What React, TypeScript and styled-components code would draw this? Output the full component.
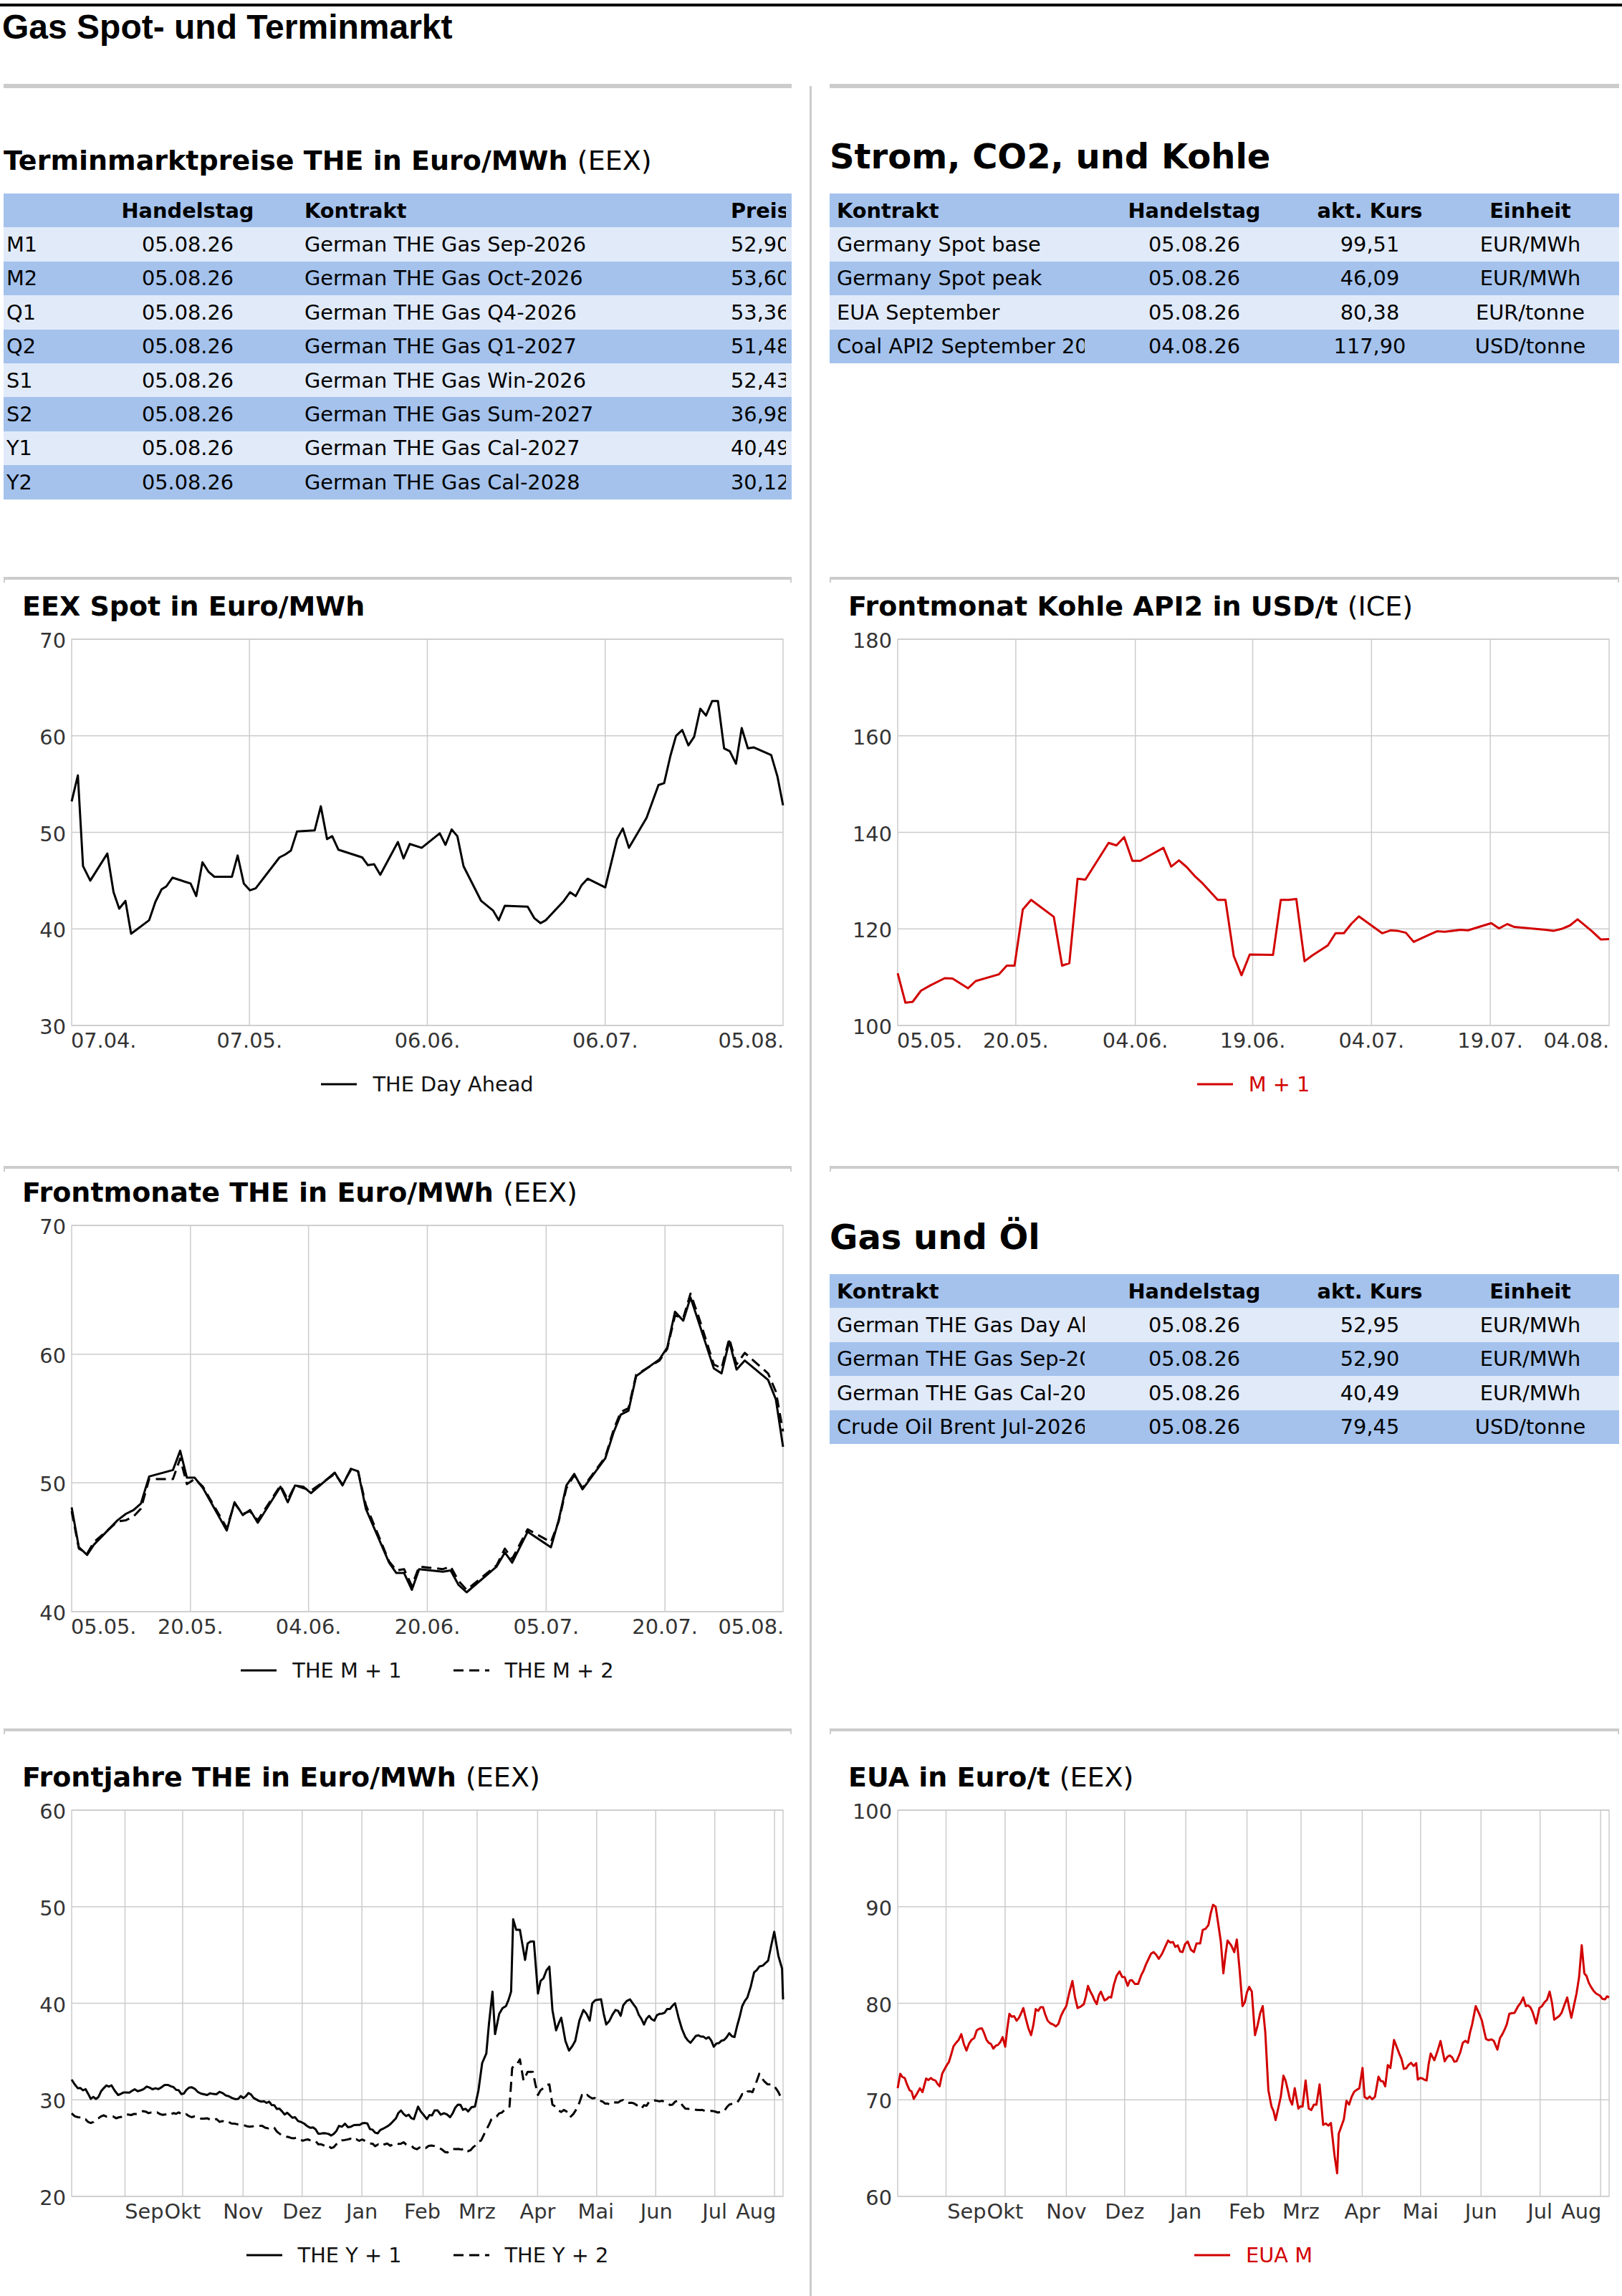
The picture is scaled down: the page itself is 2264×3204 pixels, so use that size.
import React from "react";
import styled, { createGlobalStyle } from "styled-components";

const SANS = `"DejaVu Sans", "Noto Sans", sans-serif`;

const GlobalStyle = createGlobalStyle`
  html, body { margin: 0; padding: 0; background: #fff; }
  body { font-family: ${SANS}; color: #000; }
  * { box-sizing: border-box; }
`;

type Pt = [number, number];

const conv = (x0: number, raw: number[][]): Pt[] =>
  raw.map(([zx, v]) => [(zx - x0) / 1376, v] as Pt);

function noisy(keys: Pt[], step: number, amp: number, seed: number): Pt[] {
  const out: Pt[] = [];
  let k = 0;
  for (let i = 0; i < keys.length - 1; i++) {
    const [x0, v0] = keys[i];
    const [x1, v1] = keys[i + 1];
    const n = Math.max(1, Math.round((x1 - x0) / step));
    for (let j = 0; j < n; j++) {
      const t = j / n;
      const r = Math.sin((k++ + seed) * 12.9898) * 43758.5453;
      const jit = j === 0 ? 0 : (r - Math.floor(r) - 0.5) * 2 * amp;
      out.push([x0 + (x1 - x0) * t, v0 + (v1 - v0) * t + jit]);
    }
  }
  out.push(keys[keys.length - 1]);
  return out;
}

/* ---------- data ---------- */

const spot = conv(138, [
  [138, 53.2], [150, 55.9], [160, 46.5], [174, 45.0], [207, 47.8], [219, 43.8], [230, 42.1], [242, 42.9],
  [253, 39.5], [288, 40.9], [300, 42.8], [312, 44.1], [321, 44.4], [333, 45.3], [368, 44.7], [379, 43.4],
  [391, 46.9], [403, 45.9], [414, 45.4], [448, 45.4], [459, 47.6], [471, 44.7], [483, 44.0], [494, 44.2],
  [540, 47.4], [551, 47.7], [562, 48.1], [574, 50.1], [608, 50.2], [620, 52.7], [632, 49.3], [642, 49.6],
  [654, 48.2], [700, 47.4], [711, 46.6], [723, 46.7], [735, 45.6], [769, 49.0], [780, 47.3], [792, 48.8],
  [815, 48.4], [850, 49.9], [861, 48.7], [873, 50.3], [884, 49.6], [896, 46.5], [930, 42.9], [953, 41.9],
  [964, 40.9], [976, 42.4], [1020, 42.3], [1033, 41.1], [1045, 40.6], [1055, 40.9], [1090, 42.9], [1102, 43.8],
  [1113, 43.4], [1124, 44.5], [1136, 45.2], [1170, 44.3], [1193, 49.3], [1204, 50.4], [1216, 48.4], [1250, 51.5],
  [1273, 54.9], [1284, 55.1], [1296, 57.9], [1307, 60.0], [1319, 60.6], [1331, 59.0], [1342, 59.9], [1354, 62.8],
  [1365, 62.1], [1377, 63.6], [1388, 63.6], [1400, 58.7], [1411, 58.4], [1423, 57.1], [1434, 60.8], [1446, 58.7],
  [1457, 58.8], [1491, 58.0], [1503, 55.8], [1514, 52.8],
]);

const coal = conv(167, [
  [167, 110.8], [182, 104.7], [196, 104.9], [212, 107.2], [230, 108.3], [258, 109.8], [273, 109.7], [303, 107.7],
  [318, 109.2], [363, 110.6], [378, 112.4], [393, 112.4], [409, 124.0], [425, 126.0], [469, 122.5], [485, 112.4],
  [499, 112.9], [515, 130.4], [530, 130.2], [575, 137.8], [590, 137.3], [605, 139.0], [621, 134.1], [636, 134.1],
  [681, 136.8], [696, 132.9], [711, 134.2], [726, 132.8], [741, 131.0], [757, 129.4], [786, 126.0], [801, 126.0],
  [817, 114.4], [832, 110.4], [848, 114.7], [893, 114.6], [908, 126.0], [923, 126.0], [938, 126.2], [954, 113.3],
  [969, 114.5], [999, 116.6], [1014, 119.1], [1030, 119.1], [1044, 121.0], [1059, 122.6], [1104, 119.1], [1120, 119.7],
  [1134, 119.6], [1150, 119.2], [1165, 117.3], [1195, 118.8], [1210, 119.5], [1225, 119.4], [1255, 119.8], [1270, 119.7],
  [1315, 121.2], [1330, 120.1], [1346, 121.0], [1360, 120.4], [1420, 119.8], [1436, 119.6], [1451, 120.0], [1467, 120.7],
  [1482, 122.0], [1510, 119.5], [1527, 117.8], [1543, 117.9],
]);

const m1 = conv(138, [
  [138, 48.1], [152, 45.0], [168, 44.4], [181, 45.2], [227, 47.1], [243, 47.6], [258, 47.9], [272, 48.4],
  [288, 50.5], [334, 51.0], [348, 52.5], [361, 50.4], [376, 50.4], [392, 49.6], [438, 46.3], [453, 48.5],
  [469, 47.5], [483, 47.9], [498, 46.9], [542, 49.7], [556, 48.5], [570, 49.8], [586, 49.7], [601, 49.2],
  [647, 50.8], [662, 49.8], [678, 51.1], [692, 50.9], [707, 48.0], [752, 43.8], [766, 43.0], [781, 43.0],
  [796, 41.7], [810, 43.3], [856, 43.1], [871, 43.2], [886, 42.1], [902, 41.5], [960, 43.5], [976, 44.6],
  [990, 43.8], [1020, 46.2], [1065, 45.0], [1080, 47.1], [1095, 49.8], [1110, 50.7], [1126, 49.5], [1170, 51.9],
  [1186, 53.9], [1200, 55.3], [1215, 55.6], [1230, 58.3], [1275, 59.6], [1290, 60.5], [1305, 63.3], [1321, 62.6],
  [1335, 64.4], [1350, 62.6], [1380, 58.9], [1395, 58.5], [1410, 61.0], [1424, 58.8], [1440, 59.5], [1485, 58.0],
  [1500, 56.5], [1514, 52.8],
]);

const m2 = conv(138, [
  [138, 47.8], [152, 44.9], [168, 44.5], [181, 45.4], [227, 47.0], [243, 47.1], [258, 47.4], [272, 48.0],
  [288, 50.3], [334, 50.3], [348, 51.9], [361, 49.9], [376, 50.3], [392, 49.7], [438, 46.5], [453, 48.4],
  [469, 47.6], [483, 47.8], [498, 47.1], [542, 49.8], [556, 48.7], [570, 49.8], [586, 49.6], [601, 49.4],
  [647, 50.7], [662, 49.9], [678, 51.0], [692, 50.9], [707, 48.3], [752, 43.9], [766, 43.2], [781, 43.3],
  [796, 42.0], [810, 43.5], [856, 43.3], [871, 43.5], [886, 42.4], [902, 41.7], [960, 43.6], [976, 44.9],
  [990, 44.1], [1020, 46.4], [1065, 45.4], [1080, 47.0], [1095, 49.6], [1110, 50.6], [1126, 49.6], [1170, 52.0],
  [1186, 54.1], [1200, 55.5], [1215, 55.8], [1230, 58.4], [1275, 59.5], [1290, 60.4], [1305, 63.0], [1321, 62.8],
  [1335, 64.7], [1350, 63.0], [1380, 59.2], [1395, 58.9], [1410, 61.2], [1424, 59.2], [1440, 60.1], [1485, 58.5],
  [1500, 57.1], [1514, 54.0],
]);

const y1 = noisy(conv(138, [
  [138, 32.1], [150, 31.2], [165, 31.1], [175, 30.1], [190, 30.3], [200, 31.2], [215, 31.5], [228, 30.5],
  [260, 31.1], [300, 31.2], [330, 31.4], [350, 30.6], [370, 31.3], [400, 30.5], [430, 30.7], [460, 30.1],
  [480, 30.7], [500, 29.9], [520, 29.8], [545, 28.8], [570, 28.2], [600, 27.1], [620, 26.5], [640, 26.3],
  [655, 27.3], [690, 27.4], [705, 27.6], [725, 26.6], [750, 27.3], [760, 27.8], [775, 28.9], [800, 28.0],
  [808, 29.3], [825, 28.0], [840, 28.9], [870, 28.2], [885, 29.5], [905, 28.8], [918, 29.3], [925, 31.0],
  [932, 33.8], [940, 34.8], [945, 37.8], [952, 41.2], [957, 36.8], [965, 38.9], [978, 39.7], [988, 41.2],
  [992, 48.7], [998, 47.6], [1005, 47.6], [1015, 44.5], [1020, 46.2], [1032, 46.4], [1040, 41.0], [1045, 42.3],
  [1062, 43.8], [1068, 39.3], [1075, 37.2], [1085, 38.5], [1093, 36.1], [1100, 35.1], [1112, 36.1], [1120, 38.2],
  [1128, 39.3], [1140, 38.2], [1145, 40.0], [1162, 40.4], [1172, 37.8], [1190, 39.3], [1200, 38.7], [1205, 39.8],
  [1218, 40.4], [1230, 39.5], [1245, 37.8], [1255, 38.7], [1265, 38.2], [1275, 38.9], [1295, 39.4], [1305, 40.0],
  [1312, 38.5], [1325, 36.5], [1335, 35.9], [1345, 36.6], [1370, 36.5], [1380, 35.5], [1400, 36.2], [1410, 36.9],
  [1420, 36.5], [1435, 39.7], [1445, 40.6], [1458, 43.2], [1468, 43.8], [1475, 43.9], [1485, 44.4], [1492, 46.2],
  [1497, 47.4], [1505, 44.9], [1512, 43.6], [1514, 40.4],
]), 0.004, 0.22, 3);

const y2 = noisy(conv(138, [
  [138, 28.6], [150, 28.2], [175, 27.6], [200, 28.4], [230, 28.2], [270, 28.7], [320, 28.5], [345, 28.7],
  [370, 28.2], [400, 28.1], [430, 27.8], [470, 27.4], [500, 27.3], [530, 27.1], [545, 26.3], [580, 25.9],
  [600, 25.8], [620, 25.4], [640, 25.0], [660, 25.8], [700, 25.9], [725, 25.2], [760, 25.4], [780, 25.6],
  [800, 25.0], [840, 25.2], [860, 24.6], [880, 24.9], [910, 24.8], [930, 25.8], [940, 26.9], [950, 28.0],
  [965, 28.6], [985, 29.3], [990, 33.3], [1005, 34.2], [1012, 32.0], [1020, 32.9], [1030, 32.9], [1040, 30.5],
  [1050, 31.2], [1062, 31.6], [1068, 29.5], [1080, 28.9], [1095, 28.8], [1102, 28.2], [1115, 29.1], [1125, 30.5],
  [1140, 30.3], [1160, 29.9], [1180, 29.5], [1200, 29.9], [1220, 29.7], [1240, 29.1], [1260, 29.9], [1280, 29.9],
  [1300, 29.5], [1310, 29.9], [1325, 29.1], [1340, 29.1], [1370, 28.8], [1400, 28.8], [1410, 29.5], [1425, 29.7],
  [1435, 30.6], [1455, 30.8], [1468, 32.7], [1478, 31.9], [1490, 31.6], [1500, 31.2], [1514, 30.1],
]), 0.004, 0.15, 11);

const eua = noisy(conv(167, [
  [167, 71.2], [172, 72.7], [185, 71.6], [190, 71.0], [198, 70.1], [210, 71.2], [215, 70.8], [222, 72.2],
  [240, 72.0], [248, 71.4], [253, 72.7], [262, 73.6], [270, 74.6], [280, 75.9], [290, 76.8], [300, 75.1],
  [315, 76.4], [320, 77.2], [330, 77.4], [343, 75.9], [352, 75.3], [370, 76.5], [375, 75.5], [383, 78.9],
  [397, 78.2], [410, 79.5], [425, 76.7], [434, 79.4], [448, 79.6], [457, 78.2], [473, 77.6], [483, 78.7],
  [493, 79.7], [505, 82.3], [515, 79.5], [527, 79.9], [535, 81.8], [552, 79.9], [560, 81.2], [567, 80.3],
  [580, 80.6], [585, 81.9], [596, 83.3], [606, 82.7], [612, 81.8], [620, 82.4], [632, 82.0], [638, 82.9],
  [647, 84.0], [662, 85.3], [672, 84.6], [678, 85.1], [690, 86.5], [718, 85.3], [728, 86.4], [740, 85.3],
  [745, 86.2], [752, 86.2], [757, 87.6], [768, 88.1], [777, 90.2], [782, 90.0], [792, 86.4], [797, 83.1],
  [805, 86.5], [812, 86.0], [818, 85.3], [823, 86.6], [834, 79.7], [847, 81.7], [852, 81.2], [858, 76.7],
  [873, 79.7], [878, 77.0], [884, 71.0], [890, 69.3], [898, 67.9], [908, 70.3], [913, 72.5], [930, 69.5],
  [935, 71.2], [942, 69.1], [950, 69.3], [956, 72.0], [962, 69.1], [977, 69.5], [983, 71.6], [990, 67.4],
  [1005, 67.6], [1012, 64.2], [1017, 62.4], [1020, 66.5], [1030, 68.0], [1035, 69.9], [1040, 69.5], [1045, 70.3],
  [1060, 71.2], [1066, 73.3], [1070, 70.3], [1090, 70.3], [1097, 72.4], [1110, 71.4], [1115, 73.6], [1120, 73.3],
  [1127, 76.2], [1137, 74.8], [1146, 73.2], [1155, 73.6], [1165, 73.5], [1170, 73.8], [1173, 72.1], [1190, 72.0],
  [1198, 74.8], [1205, 74.1], [1217, 76.1], [1225, 74.0], [1235, 74.6], [1248, 74.0], [1255, 74.9], [1260, 75.9],
  [1270, 75.9], [1278, 77.8], [1285, 79.7], [1297, 78.2], [1305, 76.3], [1320, 76.1], [1327, 75.2], [1332, 76.4],
  [1345, 77.8], [1350, 78.9], [1360, 79.0], [1367, 79.7], [1377, 80.6], [1382, 79.7], [1395, 79.1], [1402, 77.9],
  [1408, 79.5], [1418, 80.1], [1428, 81.2], [1437, 78.3], [1447, 78.7], [1455, 79.6], [1462, 80.6], [1470, 78.5],
  [1480, 81.0], [1485, 82.7], [1490, 86.0], [1495, 83.1], [1508, 81.7], [1518, 81.0], [1525, 80.8], [1535, 80.4],
  [1543, 80.6],
]), 0.0035, 0.3, 7);

/* ---------- layout ---------- */

const Page = styled.div`
  width: 2264px;
  height: 3204px;
  overflow: hidden;
`;

const Header = styled.header`
  height: 117px;
  padding-top: 5px;
`;

const TopLine = styled.div`
  height: 4px;
  background: #000;
`;

const PageTitle = styled.h1`
  margin: 1px 0 0 3px;
  font-family: "Liberation Sans", Arial, sans-serif;
  font-weight: bold;
  font-size: 48px;
  line-height: 56px;
  color: #000;
`;

const Body = styled.div`
  display: flex;
  align-items: stretch;
  height: 3087px;
`;

const Column = styled.div<{ $w: number; $ml: number }>`
  flex: none;
  width: ${(p) => p.$w}px;
  margin-left: ${(p) => p.$ml}px;
  display: flex;
  flex-direction: column;
`;

const Divider = styled.div`
  flex: none;
  width: 3px;
  margin: 3px 0 0 25px;
  background: #ccc;
`;

const Section = styled.section<{ $h: number }>`
  flex: none;
  height: ${(p) => p.$h}px;
  display: flex;
  flex-direction: column;
`;

const Rule = styled.div<{ $t: number; $ticks?: boolean }>`
  flex: none;
  height: ${(p) => p.$t + (p.$ticks ? 4 : 0)}px;
  margin-bottom: ${(p) => (p.$ticks ? -4 : 0)}px;
  border-top: ${(p) => p.$t}px solid #ccc;
  border-left: ${(p) => (p.$ticks ? 2 : 0)}px solid #ccc;
  border-right: ${(p) => (p.$ticks ? 2 : 0)}px solid #ccc;
`;

const HeadingBox = styled.div`
  flex: none;
  height: 123px;
  display: flex;
  align-items: flex-end;
  margin-bottom: 24px;
`;

const Heading = styled.h2<{ $size: number }>`
  margin: 0;
  font-family: ${SANS};
  font-weight: bold;
  font-size: ${(p) => p.$size}px;
  line-height: ${(p) => Math.round(p.$size * 1.165)}px;
  white-space: nowrap;
`;

const Light = styled.span`
  font-weight: normal;
`;

const Table = styled.div`
  display: flex;
  flex-direction: column;
  font-family: ${SANS};
  font-size: 28.8px;
`;

const TONES = { head: "#a4c2ec", dark: "#a4c2ec", light: "#e1eaf9" };

const TRow = styled.div<{ $cols: string; $tone: "head" | "dark" | "light" }>`
  display: grid;
  grid-template-columns: ${(p) => p.$cols};
  height: 47.4px;
  align-items: center;
  background: ${(p) => TONES[p.$tone]};
  font-weight: ${(p) => (p.$tone === "head" ? "bold" : "normal")};
`;

const Cell = styled.div<{ $center?: boolean; $pl?: number }>`
  min-width: 0;
  padding: 0 8px 0 ${(p) => p.$pl ?? 8}px;
  text-align: ${(p) => (p.$center ? "center" : "left")};
  line-height: 34px;
`;

const Clip = styled.span`
  display: block;
  overflow: hidden;
  white-space: nowrap;
`;

const ChartBlock = styled.div<{ $pt: number }>`
  padding-top: ${(p) => p.$pt}px;
`;

const ChartTitle = styled.h3`
  margin: 0 0 0 26px;
  font-family: ${SANS};
  font-weight: bold;
  font-size: 38px;
  line-height: 44px;
  white-space: nowrap;
`;

const PlotSvg = styled.svg`
  display: block;
`;

const AxisText = styled.text`
  font-family: ${SANS};
  font-size: 28.8px;
  fill: #333;
`;

const Legend = styled.div`
  display: flex;
  justify-content: center;
  align-items: center;
  gap: 72px;
  width: 993px;
  height: 44px;
  margin: 19px 0 0 95px;
`;

const LegendItem = styled.div`
  display: flex;
  align-items: center;
  gap: 22px;
`;

const LegendLabel = styled.span<{ $color: string }>`
  font-family: ${SANS};
  font-size: 28.8px;
  line-height: 44px;
  color: ${(p) => p.$color};
  white-space: nowrap;
`;

/* ---------- chart ---------- */

const PL = 95;
const PT = 24;
const PW = 993;
const PH = 539;
const SVG_H = 604;

interface Series {
  pts: Pt[];
  color: string;
  dash?: boolean;
  label: string;
}

interface ChartProps {
  width: number;
  yMin: number;
  yMax: number;
  yStep: number;
  vGrid: number[];
  xLabels: [string, number][];
  series: Series[];
}

function Swatch({ color, dash }: { color: string; dash?: boolean }) {
  return (
    <svg width={50} height={6} viewBox="0 0 50 6">
      <line x1={0} x2={50} y1={3} y2={3} stroke={color} strokeWidth={3} strokeDasharray={dash ? "14 8" : undefined} />
    </svg>
  );
}

function Chart({ width, yMin, yMax, yStep, vGrid, xLabels, series }: ChartProps) {
  const x = (f: number) => PL + f * PW;
  const y = (v: number) => PT + ((yMax - v) / (yMax - yMin)) * PH;
  const ticks: number[] = [];
  for (let v = yMin; v <= yMax + 1e-9; v += yStep) ticks.push(v);
  return (
    <>
      <PlotSvg width={width} height={SVG_H} viewBox={`0 0 ${width} ${SVG_H}`}>
        {ticks.map((v) => (
          <line key={`h${v}`} x1={PL} x2={PL + PW} y1={y(v)} y2={y(v)} stroke="#cccccc" strokeWidth={1.5} />
        ))}
        {vGrid.map((f) => (
          <line key={`v${f}`} x1={x(f)} x2={x(f)} y1={PT} y2={PT + PH} stroke="#cccccc" strokeWidth={1.5} />
        ))}
        <rect x={PL} y={PT} width={PW} height={PH} fill="none" stroke="#cccccc" strokeWidth={1.5} />
        {ticks.map((v) => (
          <AxisText key={`t${v}`} x={PL - 8} y={y(v) + 12} textAnchor="end">
            {v}
          </AxisText>
        ))}
        {xLabels.map(([t, f]) => (
          <AxisText key={t} x={x(f)} y={PT + PH + 31} textAnchor="middle">
            {t}
          </AxisText>
        ))}
        {series.map((s, i) => (
          <polyline
            key={i}
            points={s.pts.map(([f, v]) => `${x(f).toFixed(1)},${y(v).toFixed(1)}`).join(" ")}
            fill="none"
            stroke={s.color}
            strokeWidth={3}
            strokeLinejoin="round"
            strokeDasharray={s.dash ? "14 8" : undefined}
          />
        ))}
      </PlotSvg>
      <Legend>
        {series.map((s, i) => (
          <LegendItem key={i}>
            <Swatch color={s.color} dash={s.dash} />
            <LegendLabel $color={s.color === "#000" ? "#111" : s.color}>{s.label}</LegendLabel>
          </LegendItem>
        ))}
      </Legend>
    </>
  );
}

/* ---------- tables ---------- */

const LEFT_COLS = "102px 310px 595px 93px";
const RIGHT_COLS = "364px 290px 200px 248px";

const termRows = [
  ["M1", "05.08.26", "German THE Gas Sep-2026", "52,90"],
  ["M2", "05.08.26", "German THE Gas Oct-2026", "53,60"],
  ["Q1", "05.08.26", "German THE Gas Q4-2026", "53,36"],
  ["Q2", "05.08.26", "German THE Gas Q1-2027", "51,48"],
  ["S1", "05.08.26", "German THE Gas Win-2026", "52,43"],
  ["S2", "05.08.26", "German THE Gas Sum-2027", "36,98"],
  ["Y1", "05.08.26", "German THE Gas Cal-2027", "40,49"],
  ["Y2", "05.08.26", "German THE Gas Cal-2028", "30,12"],
];

const stromRows = [
  ["Germany Spot base", "05.08.26", "99,51", "EUR/MWh"],
  ["Germany Spot peak", "05.08.26", "46,09", "EUR/MWh"],
  ["EUA September", "05.08.26", "80,38", "EUR/tonne"],
  ["Coal API2 September 2026", "04.08.26", "117,90", "USD/tonne"],
];

const gasRows = [
  ["German THE Gas Day Ahead", "05.08.26", "52,95", "EUR/MWh"],
  ["German THE Gas Sep-2026", "05.08.26", "52,90", "EUR/MWh"],
  ["German THE Gas Cal-2027", "05.08.26", "40,49", "EUR/MWh"],
  ["Crude Oil Brent Jul-2026", "05.08.26", "79,45", "USD/tonne"],
];

function TermTable() {
  return (
    <Table>
      <TRow $cols={LEFT_COLS} $tone="head">
        <Cell $pl={4} />
        <Cell $center>
          <Clip>Handelstag</Clip>
        </Cell>
        <Cell>
          <Clip>Kontrakt</Clip>
        </Cell>
        <Cell>
          <Clip>Preis</Clip>
        </Cell>
      </TRow>
      {termRows.map((r, i) => (
        <TRow key={r[0]} $cols={LEFT_COLS} $tone={i % 2 === 0 ? "light" : "dark"}>
          <Cell $pl={4}>
            <Clip>{r[0]}</Clip>
          </Cell>
          <Cell $center>
            <Clip>{r[1]}</Clip>
          </Cell>
          <Cell>
            <Clip>{r[2]}</Clip>
          </Cell>
          <Cell>
            <Clip>{r[3]}</Clip>
          </Cell>
        </TRow>
      ))}
    </Table>
  );
}

function QuoteTable({ rows }: { rows: string[][] }) {
  return (
    <Table>
      <TRow $cols={RIGHT_COLS} $tone="head">
        <Cell $pl={10}>
          <Clip>Kontrakt</Clip>
        </Cell>
        <Cell $center>
          <Clip>Handelstag</Clip>
        </Cell>
        <Cell $center>
          <Clip>akt. Kurs</Clip>
        </Cell>
        <Cell $center>
          <Clip>Einheit</Clip>
        </Cell>
      </TRow>
      {rows.map((r, i) => (
        <TRow key={r[0]} $cols={RIGHT_COLS} $tone={i % 2 === 0 ? "light" : "dark"}>
          <Cell $pl={10}>
            <Clip>{r[0]}</Clip>
          </Cell>
          <Cell $center>
            <Clip>{r[1]}</Clip>
          </Cell>
          <Cell $center>
            <Clip>{r[2]}</Clip>
          </Cell>
          <Cell $center>
            <Clip>{r[3]}</Clip>
          </Cell>
        </TRow>
      ))}
    </Table>
  );
}

/* ---------- axes ---------- */

const RED = "#d20000";

const monthGridL = [0.075, 0.156, 0.241, 0.324, 0.408, 0.494, 0.57, 0.655, 0.738, 0.821, 0.904, 0.988];
const monthLabelsL: [string, number][] = [
  ["Sep", 0.102], ["Okt", 0.156], ["Nov", 0.241], ["Dez", 0.324], ["Jan", 0.408], ["Feb", 0.493],
  ["Mrz", 0.57], ["Apr", 0.655], ["Mai", 0.737], ["Jun", 0.822], ["Jul", 0.904], ["Aug", 0.962],
];
const monthGridR = [0.068, 0.151, 0.237, 0.319, 0.405, 0.491, 0.567, 0.653, 0.735, 0.82, 0.903, 0.988];
const monthLabelsR: [string, number][] = [
  ["Sep", 0.097], ["Okt", 0.151], ["Nov", 0.237], ["Dez", 0.319], ["Jan", 0.405], ["Feb", 0.491],
  ["Mrz", 0.567], ["Apr", 0.653], ["Mai", 0.735], ["Jun", 0.82], ["Jul", 0.903], ["Aug", 0.961],
];

export default function App() {
  return (
    <>
      <GlobalStyle />
      <Page>
        <Header>
          <TopLine />
          <PageTitle>Gas Spot- und Terminmarkt</PageTitle>
        </Header>
        <Body>
          <Column $w={1100} $ml={5}>
            <Section $h={688}>
              <Rule $t={6} />
              <HeadingBox>
                <Heading $size={38}>
                  Terminmarktpreise THE in Euro/MWh <Light>(EEX)</Light>
                </Heading>
              </HeadingBox>
              <TermTable />
            </Section>
            <Section $h={822}>
              <Rule $t={4} $ticks />
              <ChartBlock $pt={15}>
                <ChartTitle>EEX Spot in Euro/MWh</ChartTitle>
                <Chart
                  width={1100}
                  yMin={30}
                  yMax={70}
                  yStep={10}
                  vGrid={[0.25, 0.5, 0.75]}
                  xLabels={[["07.04.", 0.045], ["07.05.", 0.25], ["06.06.", 0.5], ["06.07.", 0.75], ["05.08.", 0.955]]}
                  series={[{ pts: spot, color: "#000", label: "THE Day Ahead" }]}
                />
              </ChartBlock>
            </Section>
            <Section $h={785}>
              <Rule $t={4} $ticks />
              <ChartBlock $pt={11}>
                <ChartTitle>
                  Frontmonate THE in Euro/MWh <Light>(EEX)</Light>
                </ChartTitle>
                <Chart
                  width={1100}
                  yMin={40}
                  yMax={70}
                  yStep={10}
                  vGrid={[0.167, 0.333, 0.5, 0.667, 0.834]}
                  xLabels={[
                    ["05.05.", 0.045], ["20.05.", 0.167], ["04.06.", 0.333], ["20.06.", 0.5],
                    ["05.07.", 0.667], ["20.07.", 0.834], ["05.08.", 0.955],
                  ]}
                  series={[
                    { pts: m1, color: "#000", label: "THE M + 1" },
                    { pts: m2, color: "#000", dash: true, label: "THE M + 2" },
                  ]}
                />
              </ChartBlock>
            </Section>
            <Section $h={792}>
              <Rule $t={4} $ticks />
              <ChartBlock $pt={42}>
                <ChartTitle>
                  Frontjahre THE in Euro/MWh <Light>(EEX)</Light>
                </ChartTitle>
                <Chart
                  width={1100}
                  yMin={20}
                  yMax={60}
                  yStep={10}
                  vGrid={monthGridL}
                  xLabels={monthLabelsL}
                  series={[
                    { pts: y1, color: "#000", label: "THE Y + 1" },
                    { pts: y2, color: "#000", dash: true, label: "THE Y + 2" },
                  ]}
                />
              </ChartBlock>
            </Section>
          </Column>
          <Divider />
          <Column $w={1102} $ml={25}>
            <Section $h={688}>
              <Rule $t={6} />
              <HeadingBox>
                <Heading $size={48}>Strom, CO2, und Kohle</Heading>
              </HeadingBox>
              <QuoteTable rows={stromRows} />
            </Section>
            <Section $h={822}>
              <Rule $t={4} $ticks />
              <ChartBlock $pt={15}>
                <ChartTitle>
                  Frontmonat Kohle API2 in USD/t <Light>(ICE)</Light>
                </ChartTitle>
                <Chart
                  width={1102}
                  yMin={100}
                  yMax={180}
                  yStep={20}
                  vGrid={[0.166, 0.334, 0.499, 0.666, 0.833]}
                  xLabels={[
                    ["05.05.", 0.045], ["20.05.", 0.166], ["04.06.", 0.334], ["19.06.", 0.499],
                    ["04.07.", 0.666], ["19.07.", 0.833], ["04.08.", 0.954],
                  ]}
                  series={[{ pts: coal, color: RED, label: "M + 1" }]}
                />
              </ChartBlock>
            </Section>
            <Section $h={785}>
              <Rule $t={4} $ticks />
              <HeadingBox>
                <Heading $size={48}>Gas und Öl</Heading>
              </HeadingBox>
              <QuoteTable rows={gasRows} />
            </Section>
            <Section $h={792}>
              <Rule $t={4} $ticks />
              <ChartBlock $pt={42}>
                <ChartTitle>
                  EUA in Euro/t <Light>(EEX)</Light>
                </ChartTitle>
                <Chart
                  width={1102}
                  yMin={60}
                  yMax={100}
                  yStep={10}
                  vGrid={monthGridR}
                  xLabels={monthLabelsR}
                  series={[{ pts: eua, color: RED, label: "EUA M" }]}
                />
              </ChartBlock>
            </Section>
          </Column>
        </Body>
      </Page>
    </>
  );
}
